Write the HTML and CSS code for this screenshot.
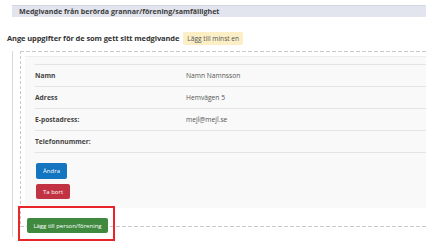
FILE: index.html
```html
<!DOCTYPE html>
<html lang="sv">
  <head>
    <meta charset="UTF-8" />
    <meta name="viewport" content="width=device-width, initial-scale=1.0" />
    <title>Medgivande</title>
    <link rel="stylesheet" href="styles.css">
  </head>
  <body>
    <div class="page">
      <div class="section-head">Medgivande från berörda grannar/förening/samfällighet</div>

      <h4 class="lead">
        Ange uppgifter för de som gett sitt medgivande
        <span class="badge">Lägg till minst en</span>
      </h4>

      <div class="group">
        <div class="dashed">
          <div class="card">
            <table class="info">
              <tr>
                <th>Namn</th>
                <td>Namn Namnsson</td>
              </tr>
              <tr>
                <th>Adress</th>
                <td>Hemvägen 5</td>
              </tr>
              <tr>
                <th>E-postadress:</th>
                <td>mejl@mejl.se</td>
              </tr>
              <tr>
                <th>Telefonnummer:</th>
                <td></td>
              </tr>
            </table>
            <div class="actions">
              <button class="btn btn-blue">Ändra</button>
              <button class="btn btn-red">Ta bort</button>
            </div>
          </div>
        </div>
        <div class="add-row">
          <button class="btn btn-green">Lägg till person/förening</button>
        </div>
      </div>

      <!-- markering runt knappen -->
      <div class="highlight"></div>
    </div>
  </body>
</html>
```

FILE: styles.css
```css
html, body {
  margin: 0;
  padding: 0;
  background: white;
}
body {
  font-family: "Open Sans", "Noto Sans", sans-serif;
  color: #444;
  width: 432px;
  height: 243px;
  overflow: hidden;
  position: relative;
}
.page {
  padding-top: 5px;
}
.section-head {
  margin-left: 12px;
  width: 414px;
  height: 12px;
  line-height: 11px;
  border-top: 1px solid #d3d7e1;
  background: #e2e5ee;
  padding-left: 7px;
  box-sizing: border-box;
  font-size: 7.1px;
  font-weight: bold;
  color: #3d3d3d;
}
.lead {
  margin: 15px 0 0 7px;
  font-size: 7.5px;
  font-weight: bold;
  color: #333;
  line-height: 13px;
  letter-spacing: -0.1px;
  display: flex;
  align-items: center;
  gap: 4px;
}
.badge {
  font-weight: normal;
  font-size: 6.6px;
  letter-spacing: 0;
  background: #fcefc6;
  color: #555;
  padding: 0 4px;
  border-radius: 2px;
  line-height: 13px;
}
.group {
  margin-left: 12px;
  margin-top: 6px;
  width: 414px;
  border-left: 1px solid #d8d8d8;
  padding: 0 0 4px 7px;
  box-sizing: border-box;
  overflow: hidden;
}
.dashed {
  padding: 5px 0 19px 5px;
  background:
    repeating-linear-gradient(90deg, #c9c9c9 0 4px, transparent 4px 6px) top left / 100% 1px no-repeat,
    repeating-linear-gradient(90deg, #c9c9c9 0 4px, transparent 4px 6px) bottom left / 100% 1px no-repeat,
    repeating-linear-gradient(180deg, #c9c9c9 0 3px, transparent 3px 5px) top left / 1px 100% no-repeat;
}
.card {
  background: #f9f9f9;
  border-top: 1px solid #ededed;
  padding: 7px 0 9px 10px;
}
.info {
  width: 100%;
  border-collapse: collapse;
  font-size: 6.7px;
}
.info tr {
  border-top: 1px solid #e4e4e4;
  height: 22px;
}
.info tr:last-child {
  border-bottom: 1px solid #e4e4e4;
}
.info th {
  text-align: left;
  font-weight: bold;
  color: #444;
  width: 151px;
  padding: 0;
}
.info td {
  color: #555;
  padding: 0;
}
.actions {
  padding: 10px 0 0 1px;
  display: flex;
  flex-direction: column;
  align-items: flex-start;
  gap: 5px;
}
.btn {
  font-family: "Open Sans", "Noto Sans", sans-serif;
  font-size: 6px;
  color: white;
  border: none;
  border-radius: 2px;
  padding: 0 6px;
  height: 16px;
  cursor: pointer;
}
.btn-blue {
  background: #1374c0;
  width: 31px;
}
.btn-red {
  background: #c13242;
  width: 34px;
  height: 15px;
}
.btn-green {
  background: #408a40;
  width: 81px;
  height: 15px;
  padding: 0;
}
.add-row {
  display: flex;
  margin-top: -9px;
  padding-left: 7px;
}
.highlight {
  position: absolute;
  left: 18px;
  top: 206px;
  width: 97px;
  height: 35px;
  border: 2px solid #e8262a;
  box-sizing: border-box;
}
```
